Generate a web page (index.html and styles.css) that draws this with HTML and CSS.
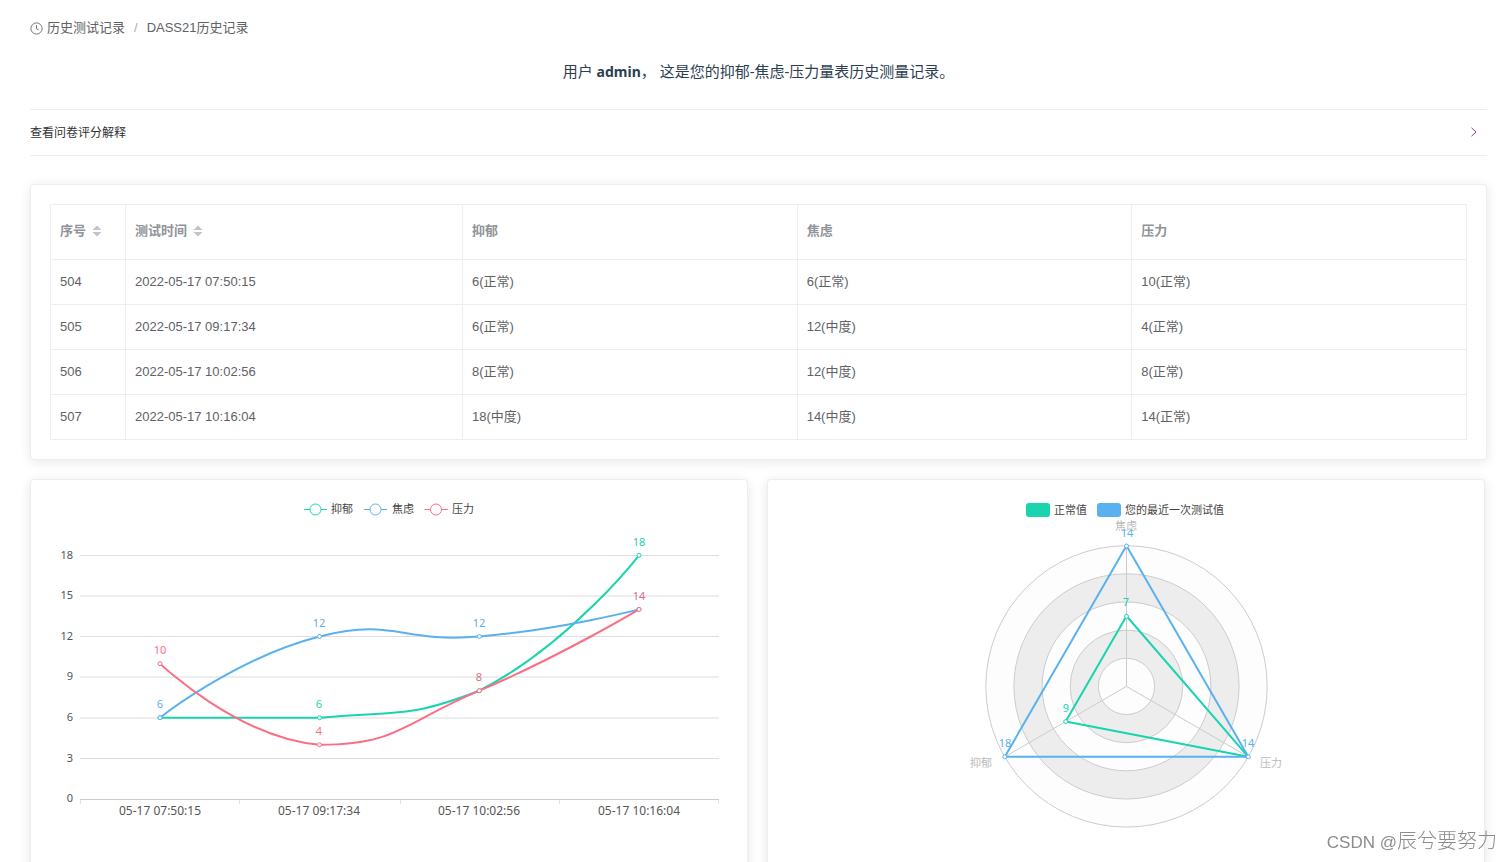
FILE: index.html
```html
<!DOCTYPE html>
<html lang="zh-CN">
<head>
<meta charset="utf-8">
<meta name="viewport" content="width=device-width, initial-scale=1">
<title>DASS21历史记录</title>
<link rel="stylesheet" href="styles.css">
</head>
<body>
<main class="page">
  <nav class="breadcrumb" aria-label="breadcrumb">
    <a class="crumb" href="#history">
      <svg class="clock" viewBox="0 0 13 13" aria-hidden="true"><circle cx="6.5" cy="6.5" r="5.6"/><path d="M6.5 3.2V6.8L8.6 8"/></svg>
      <span>历史测试记录</span>
    </a>
    <span class="slash">/</span>
    <a class="crumb" href="#dass21">DASS21历史记录</a>
  </nav>

  <p class="intro">用户 <strong>admin</strong>， 这是您的抑郁-焦虑-压力量表历史测量记录。</p>

  <button class="collapse" type="button" aria-expanded="false">
    <span>查看问卷评分解释</span>
    <svg class="arrow" viewBox="0 0 10 10" aria-hidden="true"><path d="M2.5 0.8L7 5L2.5 9.2"/></svg>
  </button>

  <section class="card table-card">
    <table class="records">
      <colgroup><col class="col-id"><col class="col-time"><col><col><col></colgroup>
      <thead>
        <tr>
          <th scope="col"><button class="sort" type="button">序号<svg viewBox="0 0 10 12" aria-hidden="true"><path d="M5 0.5L9.5 5H0.5zM5 11.5L0.5 7H9.5z"/></svg></button></th>
          <th scope="col"><button class="sort" type="button">测试时间<svg viewBox="0 0 10 12" aria-hidden="true"><path d="M5 0.5L9.5 5H0.5zM5 11.5L0.5 7H9.5z"/></svg></button></th>
          <th scope="col">抑郁</th>
          <th scope="col">焦虑</th>
          <th scope="col">压力</th>
        </tr>
      </thead>
      <tbody>
        <tr><td>504</td><td>2022-05-17 07:50:15</td><td>6(正常)</td><td>6(正常)</td><td>10(正常)</td></tr>
        <tr><td>505</td><td>2022-05-17 09:17:34</td><td>6(正常)</td><td>12(中度)</td><td>4(正常)</td></tr>
        <tr><td>506</td><td>2022-05-17 10:02:56</td><td>8(正常)</td><td>12(中度)</td><td>8(正常)</td></tr>
        <tr><td>507</td><td>2022-05-17 10:16:04</td><td>18(中度)</td><td>14(中度)</td><td>14(正常)</td></tr>
      </tbody>
    </table>
  </section>

  <div class="charts">
    <section class="card">
      <svg class="chart" viewBox="0 0 716 400" role="img" aria-label="历史趋势">
        <g class="legend-line">
          <g class="green"><path d="M273 29.5H296"/><circle cx="284.5" cy="29.5" r="5.5"/></g>
          <g class="blue"><path d="M333 29.5H356"/><circle cx="344.5" cy="29.5" r="5.5"/></g>
          <g class="red"><path d="M393.500 29.5H417"/><circle cx="405" cy="29.500" r="5.5"/></g>
        </g>
        <g class="legend-text">
          <text x="300" y="33">抑郁</text><text x="361" y="33">焦虑</text><text x="421" y="33">压力</text>
        </g>
        <path class="grid" d="M49 75.500H688M49 116H688M49 156.500H688M49 197H688M49 238H688M49 278.500H688"/>
        <path class="axis" d="M49 319.500H688"/>
        <path class="ticks" d="M49.500 320V324M208.500 320V324M369.500 320V324M528.500 320V324M687.500 320V324"/>
        <g class="label end">
          <text x="42" y="79">18</text><text x="42" y="119">15</text><text x="42" y="160">12</text><text x="42" y="200">9</text><text x="42" y="241">6</text><text x="42" y="282">3</text><text x="42" y="322">0</text>
        </g>
        <g class="label mid">
          <text x="129" y="335">05-17 07:50:15</text><text x="288" y="335">05-17 09:17:34</text><text x="448" y="335">05-17 10:02:56</text><text x="608" y="335">05-17 10:16:04</text>
        </g>
        <g class="series green">
          <path d="M129 237.700C129 237.700 209.400 237.700 288.600 237.700C369 230.900 378.700 237.700 448.300 210.700C538.400 164.800 608 75.300 608 75.300"/>
          <circle cx="129" cy="237.700" r="2"/><circle cx="288.500" cy="237.700" r="2"/><circle cx="448.300" cy="210.700" r="2"/><circle cx="608" cy="75.300" r="2"/>
        </g>
        <g class="series blue">
          <path d="M129 237.700C129 237.700 204.200 178 288.600 156.500C363.800 137.400 369.100 163.200 448.300 156.500C528.800 149.700 608 129.400 608 129.400"/>
          <circle cx="129" cy="237.700" r="2"/><circle cx="288.500" cy="156.500" r="2"/><circle cx="448.300" cy="156.500" r="2"/><circle cx="608" cy="129.400" r="2"/>
        </g>
        <g class="series red">
          <path d="M129 183.600C129 183.600 206.400 257.800 288.600 264.800C366 264.800 370.800 243.500 448.300 210.700C530.500 175.800 608 129.400 608 129.400"/>
          <circle cx="129" cy="183.600" r="2"/><circle cx="288.500" cy="264.800" r="2"/><circle cx="448.300" cy="210.700" r="2"/><circle cx="608" cy="129.400" r="2"/>
        </g>
        <g class="value green"><text x="288" y="228">6</text><text x="608" y="66">18</text></g>
        <g class="value blue"><text x="129" y="228">6</text><text x="288" y="147">12</text><text x="448" y="147">12</text></g>
        <g class="value red"><text x="129" y="174">10</text><text x="288" y="255">4</text></g>
        <g class="value mixed"><text x="448" y="201">8</text><text x="608" y="120">14</text></g>
      </svg>
    </section>

    <section class="card">
      <svg class="chart" viewBox="0 0 716 400" role="img" aria-label="最近一次测试">
        <rect class="fill-green" x="258" y="23" width="24" height="14" rx="3"/>
        <rect class="fill-blue" x="329" y="23" width="24" height="14" rx="3"/>
        <g class="legend-text"><text x="286" y="34">正常值</text><text x="357" y="34">您的最近一次测试值</text></g>
        <g class="rings">
          <circle class="pale" cx="358.500" cy="206.400" r="140.700"/>
          <circle class="shade" cx="358.500" cy="206.400" r="112.600"/>
          <circle class="pale" cx="358.500" cy="206.400" r="84.400"/>
          <circle class="shade" cx="358.500" cy="206.400" r="56.300"/>
          <circle class="pale" cx="358.500" cy="206.400" r="28.100"/>
          <path d="M358.500 206.400V65.700M358.500 206.400L236.800 276.800M358.500 206.400L480.300 276.800"/>
        </g>
        <g class="radar-name"><text x="358" y="50">焦虑</text><text x="213" y="287">抑郁</text><text x="503" y="287">压力</text></g>
        <g class="series green">
          <path d="M358.500 136L297.700 241.600L480.300 276.800Z"/>
          <circle cx="358.500" cy="136.400" r="2"/><circle cx="297.700" cy="241.600" r="2"/>
        </g>
        <g class="series blue">
          <path d="M358.500 65.700L236.800 276.800H480.300Z"/>
          <circle cx="358.500" cy="66" r="2"/><circle cx="236.800" cy="276.800" r="2"/><circle cx="480.300" cy="276.800" r="2"/>
        </g>
        <g class="value green"><text x="358" y="126">7</text><text x="298" y="232">9</text></g>
        <g class="value blue"><text x="359" y="57">14</text><text x="237" y="267">18</text><text x="480" y="267">14</text></g>
      </svg>
    </section>
  </div>
</main>
<div class="watermark"><span class="site">CSDN @</span>辰兮要努力</div>
</body>
</html>
```
FILE: styles.css
```css
* { box-sizing: border-box; }

body {
  margin: 0;
  background: #fff;
  color: #606266;
  font-family: "Liberation Sans", "Noto Sans CJK SC", sans-serif;
  font-size: 13px;
}

button {
  margin: 0;
  padding: 0;
  border: 0;
  background: none;
  color: inherit;
  font: inherit;
  cursor: pointer;
}

.page { padding: 18px 24px 0 30px; }

.breadcrumb {
  display: flex;
  align-items: center;
  line-height: 20px;
}

.crumb {
  display: flex;
  align-items: center;
  gap: 4px;
  color: inherit;
  text-decoration: none;
}

.slash { margin: 0 9px; color: #a8abb2; }

.clock {
  width: 13px;
  height: 13px;
  fill: none;
  stroke: #73767a;
}

.intro {
  margin: 21px 0 25px;
  color: #2c3e50;
  font-family: "Noto Sans", "Noto Sans CJK SC", sans-serif;
  font-size: 15px;
  line-height: 24px;
  text-align: center;
}

.intro strong { font-size: 14px; }

.collapse {
  display: flex;
  align-items: center;
  justify-content: space-between;
  width: 100%;
  height: 47px;
  padding: 0 8px 2px 0;
  border: 1px solid #ebeef5;
  border-width: 1px 0;
  color: #303133;
  font-size: 12px;
}

.arrow {
  width: 10px;
  height: 10px;
  fill: none;
  stroke: #7a4b82;
}

.card {
  min-width: 0;
  border: 1px solid #ebeef5;
  border-radius: 4px;
  background: #fff;
  box-shadow: 0 2px 12px rgba(0, 0, 0, 0.1);
}

.table-card { margin-top: 28px; padding: 19px; }

.records {
  width: 100%;
  table-layout: fixed;
  border-collapse: collapse;
}

.col-id { width: 75px; }
.col-time { width: 337px; }

.records th,
.records td {
  height: 45px;
  padding: 0 9px;
  border: 1px solid #ebeef5;
  line-height: 20px;
  text-align: left;
}

.records th {
  height: 55px;
  padding-bottom: 2px;
  color: #909399;
  font-weight: 700;
}

.sort {
  display: flex;
  align-items: center;
  gap: 6px;
}

.sort svg {
  width: 10px;
  height: 12px;
  fill: #c0c4cc;
}

.charts {
  display: grid;
  grid-template-columns: 1fr 1fr;
  gap: 19px;
  margin: 19px 2px 0 0;
}

.chart {
  display: block;
  width: 100%;
  height: auto;
  font-family: "Noto Sans", "Noto Sans CJK SC", sans-serif;
}

.green { stroke: #19d4ae; fill: #19d4ae; }
.blue { stroke: #5ab1ef; fill: #5ab1ef; }
.red { stroke: #fa6e86; fill: #fa6e86; }
.fill-green { fill: #19d4ae; }
.fill-blue { fill: #5ab1ef; }

.legend-line circle { fill: #fff; }
.legend-text { fill: #444; font-size: 11px; }

.grid { stroke: #ddd; }
.axis { stroke: #ccc; }
.ticks { stroke: #e4e4e4; }

.label { fill: #555; font-size: 11px; }
.end { text-anchor: end; }
.mid { font-size: 12px; text-anchor: middle; }

.series path { fill: none; stroke-width: 2; stroke-linejoin: round; }
.series circle { fill: #fff; stroke-width: 1; }

.value { stroke: none; font-size: 11px; text-anchor: middle; }
.mixed { fill: #d96f88; }

.rings { fill: none; stroke: #ccc; }
.rings .pale { fill: #fdfdfd; }
.rings .shade { fill: #ededed; }
.radar-name { fill: #bbb; font-size: 11px; text-anchor: middle; }

.watermark {
  position: fixed;
  right: 14px;
  bottom: 4px;
  color: #8c8c8c;
  font-size: 20px;
  font-weight: 300;
  line-height: 30px;
}

.site { font-size: 17px; }
```
